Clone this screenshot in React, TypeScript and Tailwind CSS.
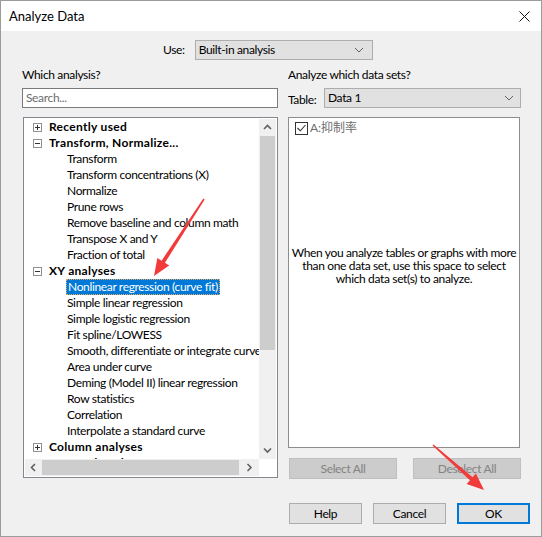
import React from "react"

const treeGroups: { label: string; expanded: boolean; children?: string[] }[] = [
  { label: "Recently used", expanded: false },
  {
    label: "Transform, Normalize...",
    expanded: true,
    children: [
      "Transform",
      "Transform concentrations (X)",
      "Normalize",
      "Prune rows",
      "Remove baseline and column math",
      "Transpose X and Y",
      "Fraction of total",
    ],
  },
  {
    label: "XY analyses",
    expanded: true,
    children: [
      "Nonlinear regression (curve fit)",
      "Simple linear regression",
      "Simple logistic regression",
      "Fit spline/LOWESS",
      "Smooth, differentiate or integrate curve",
      "Area under curve",
      "Deming (Model II) linear regression",
      "Row statistics",
      "Correlation",
      "Interpolate a standard curve",
    ],
  },
  { label: "Column analyses", expanded: false },
  { label: "Grouped analyses", expanded: false },
]

const ExpandBox = ({ open }: { open: boolean }) => (
  <span className="relative w-[9px] h-[9px] border border-[#919191] bg-white shrink-0">
    <span className="absolute left-[1px] top-[3px] w-[5px] h-[1px] bg-[#333]" />
    {!open && <span className="absolute left-[3px] top-[1px] w-[1px] h-[5px] bg-[#333]" />}
  </span>
)

const Chevron = ({ dir, className = "" }: { dir: "up" | "down" | "left" | "right"; className?: string }) => {
  const d = {
    up: "M1 6 L4.5 2.5 L8 6",
    down: "M1 2.5 L4.5 6 L8 2.5",
    left: "M6 1 L2.5 4.5 L6 8",
    right: "M2.5 1 L6 4.5 L2.5 8",
  }[dir]
  return (
    <svg width="9" height="9" viewBox="0 0 9 9" className={className}>
      <path d={d} fill="none" stroke="#606060" strokeWidth="1.6" />
    </svg>
  )
}

const ComboArrow = () => (
  <svg width="10" height="6" viewBox="0 0 10 6">
    <path d="M1 1 L5 5 L9 1" fill="none" stroke="#606060" strokeWidth="1" />
  </svg>
)

// red annotation arrow, tapered shaft + filled head
const Arrow = ({ x1, y1, x2, y2 }: { x1: number; y1: number; x2: number; y2: number }) => {
  const dx = x2 - x1
  const dy = y2 - y1
  const len = Math.hypot(dx, dy)
  const ux = dx / len
  const uy = dy / len
  const px = -uy
  const py = ux
  const head = 17
  const hw = 7
  const bx = x2 - ux * head
  const by = y2 - uy * head
  const pts = [
    [x1 + px * 0.8, y1 + py * 0.8],
    [bx + px * 2, by + py * 2],
    [bx + px * hw, by + py * hw],
    [x2, y2],
    [bx - px * hw, by - py * hw],
    [bx - px * 2, by - py * 2],
    [x1 - px * 0.8, y1 - py * 0.8],
  ]
  return <polygon points={pts.map((p) => p.join(",")).join(" ")} fill="#f23a3a" />
}

export default function App() {
  return (
    <div className="relative w-[542px] h-[537px] border border-[#9b9b9b] bg-[#f0f0f0] flex flex-col text-[12px] leading-[16px] tracking-[-0.35px] text-black font-['Lato','Noto_Sans_CJK_SC',sans-serif]">
      {/* Title bar */}
      <div className="h-[30px] bg-white flex items-center justify-between pl-[8px] pr-[11px] shrink-0">
        <span className="text-[13px] tracking-normal">Analyze Data</span>
        <svg width="11" height="11" viewBox="0 0 11 11">
          <path d="M0.5 0.5 L10.5 10.5 M10.5 0.5 L0.5 10.5" stroke="#111" strokeWidth="1" />
        </svg>
      </div>

      {/* Use */}
      <div className="flex items-center mt-[9px] pl-[162px] gap-[10px]">
        <span>Use:</span>
        <div className="w-[178px] h-[20px] border border-[#adadad] bg-[#e1e1e1] flex items-center justify-between pl-[3px] pr-[8px]">
          <span>Built-in analysis</span>
          <ComboArrow />
        </div>
      </div>

      <div className="flex pl-[21px] gap-[10px]">
        {/* Left column */}
        <div className="w-[256px] flex flex-col">
          <div className="mt-[7px] h-[16px]">Which analysis?</div>
          <div className="mt-[5px] h-[20px] border border-[#7a7a7a] bg-white flex items-center pl-[3px] text-[#6d6d6d]">
            Search...
          </div>
          <div className="mt-[9px] ml-[1px] w-[255px] h-[361px] border border-[#828790] bg-white p-[1px] flex flex-col">
            <div className="flex flex-1 min-h-0">
              <div className="flex-1 overflow-hidden">
                {treeGroups.map((g) => (
                  <div key={g.label}>
                    <div className="h-[16px] flex items-center pl-[8px] gap-[7px]">
                      <ExpandBox open={g.expanded} />
                      <span className="font-bold tracking-[0.3px] whitespace-nowrap">{g.label}</span>
                    </div>
                    {g.expanded &&
                      g.children?.map((c) => {
                        const sel = c.startsWith("Nonlinear")
                        return (
                          <div key={c} className="h-[16px] flex items-center pl-[41px] whitespace-nowrap">
                            {sel ? (
                              <span className="h-[16px] px-[1px] bg-[#0078d7] text-white border border-dotted border-[#e8a860] flex items-center">
                                {c}
                              </span>
                            ) : (
                              <span className="pl-[1px]">{c}</span>
                            )}
                          </div>
                        )
                      })}
                  </div>
                ))}
              </div>
              {/* vertical scrollbar */}
              <div className="w-[17px] bg-[#f0f0f0] flex flex-col">
                <div className="h-[17px] flex items-center justify-center">
                  <Chevron dir="up" />
                </div>
                <div className="h-[214px] mx-[1px] bg-[#cdcdcd]" />
                <div className="flex-1" />
                <div className="h-[17px] flex items-center justify-center">
                  <Chevron dir="down" />
                </div>
              </div>
            </div>
            {/* horizontal scrollbar */}
            <div className="h-[17px] flex shrink-0">
              <div className="flex-1 bg-[#f0f0f0] flex items-center">
                <div className="w-[17px] flex justify-center">
                  <Chevron dir="left" />
                </div>
                <div className="w-[197px] h-[15px] bg-[#cdcdcd]" />
                <div className="flex-1 flex justify-center">
                  <Chevron dir="right" />
                </div>
              </div>
              <div className="w-[17px] bg-white" />
            </div>
          </div>
        </div>

        {/* Right column */}
        <div className="w-[233px] flex flex-col">
          <div className="mt-[7px] h-[16px]">Analyze which data sets?</div>
          <div className="mt-[5px] flex items-center justify-between">
            <span className="mt-[4px]">Table:</span>
            <div className="w-[197px] h-[20px] border border-[#adadad] bg-[#e1e1e1] flex items-center justify-between pl-[3px] pr-[6px]">
              <span>Data 1</span>
              <ComboArrow />
            </div>
          </div>
          <div className="mt-[9px] h-[331px] w-[232px] border border-[#8d8d8d] bg-white flex flex-col">
            <div className="flex items-center mt-[2px] pl-[6px] gap-[2px]">
              <span className="w-[13px] h-[13px] border border-[#333] flex items-center justify-center">
                <svg width="9" height="8" viewBox="0 0 9 8">
                  <path d="M0.5 4 L3.3 6.8 L8.5 1" fill="none" stroke="#333" strokeWidth="1.1" />
                </svg>
              </span>
              <span className="text-[#6d6d6d] tracking-normal">A:抑制率</span>
            </div>
            <div className="mt-[110px] text-center leading-[13px] whitespace-nowrap">
              When you analyze tables or graphs with more
              <br />
              than one data set, use this space to select
              <br />
              which data set(s) to analyze.
            </div>
          </div>
          <div className="mt-[10px] flex justify-between pl-[1px]">
            <div className="w-[108px] h-[21px] bg-[#cccccc] border border-[#bfbfbf] text-[#838383] flex items-center justify-center">
              Select All
            </div>
            <div className="w-[108px] h-[21px] bg-[#cccccc] border border-[#bfbfbf] text-[#838383] flex items-center justify-center">
              Deselect All
            </div>
          </div>
        </div>
      </div>

      {/* Bottom buttons */}
      <div className="mt-[24px] flex pl-[288px] gap-[11px]">
        <div className="w-[73px] h-[21px] bg-[#e1e1e1] border border-[#adadad] flex items-center justify-center">Help</div>
        <div className="w-[73px] h-[21px] bg-[#e1e1e1] border border-[#adadad] flex items-center justify-center">Cancel</div>
        <div className="w-[73px] h-[21px] bg-[#e1e1e1] border-2 border-[#0078d7] flex items-center justify-center">OK</div>
      </div>

      {/* annotation arrows */}
      <svg className="absolute left-[-1px] top-[-1px] pointer-events-none" width="542" height="537">
        <Arrow x1={204} y1={199} x2={154} y2={276} />
        <Arrow x1={433} y1={445} x2={484} y2={490} />
      </svg>
    </div>
  )
}
